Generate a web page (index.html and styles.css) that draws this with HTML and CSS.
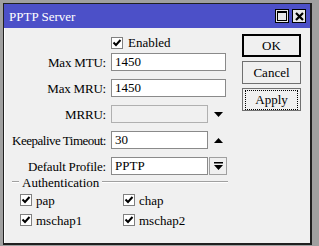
FILE: index.html
```html
<!DOCTYPE html>
<html lang="en">
<head>
    <meta charset="UTF-8">
    <title>PPTP Server</title>
    <link rel="stylesheet" href="styles.css">
</head>
<body>
    <div class="window">
        <div class="titlebar">
            <span class="title">PPTP Server</span>
            <span class="tb-btn"><span class="max-box"></span></span>
            <span class="tb-btn">
                <svg width="9" height="9" viewBox="0 0 9 9"><path d="M1 1L8 8M8 1L1 8" stroke="#000" stroke-width="2.2"/></svg>
            </span>
        </div>
        <div class="body">
            <div class="form">
                <div class="enabled-row">
                    <span class="check"><svg width="10" height="10" viewBox="0 0 10 10"><path d="M1.5 4.5L4 7L8.5 2" fill="none" stroke="#000" stroke-width="2"/></svg></span>
                    <span>Enabled</span>
                </div>
                <div class="fields">
                    <label>Max MTU:</label>
                    <div class="field"><span class="input wide">1450</span></div>
                    <label>Max MRU:</label>
                    <div class="field"><span class="input wide">1450</span></div>
                    <label>MRRU:</label>
                    <div class="field">
                        <span class="input disabled"></span>
                        <span class="arrow"><svg width="9" height="5" viewBox="0 0 9 5"><path d="M0 0H9L4.5 5Z" fill="#000"/></svg></span>
                    </div>
                    <label class="long">Keepalive Timeout:</label>
                    <div class="field">
                        <span class="input short">30</span>
                        <span class="arrow"><svg width="9" height="5" viewBox="0 0 9 5"><path d="M0 5H9L4.5 0Z" fill="#000"/></svg></span>
                    </div>
                    <label>Default Profile:</label>
                    <div class="field">
                        <span class="input short">PPTP</span>
                        <span class="drop"><svg width="9" height="9" viewBox="0 0 9 9"><path d="M0 0H9V1.5H0Z M0 3H9L4.5 8Z" fill="#000"/></svg></span>
                    </div>
                </div>
                <div class="group-title">
                    <span class="line short-line"></span>
                    <span>Authentication</span>
                    <span class="line"></span>
                </div>
                <div class="auth">
                    <div class="opt"><span class="check"><svg width="10" height="10" viewBox="0 0 10 10"><path d="M1.5 4.5L4 7L8.5 2" fill="none" stroke="#000" stroke-width="2"/></svg></span>pap</div>
                    <div class="opt"><span class="check"><svg width="10" height="10" viewBox="0 0 10 10"><path d="M1.5 4.5L4 7L8.5 2" fill="none" stroke="#000" stroke-width="2"/></svg></span>chap</div>
                    <div class="opt"><span class="check"><svg width="10" height="10" viewBox="0 0 10 10"><path d="M1.5 4.5L4 7L8.5 2" fill="none" stroke="#000" stroke-width="2"/></svg></span>mschap1</div>
                    <div class="opt"><span class="check"><svg width="10" height="10" viewBox="0 0 10 10"><path d="M1.5 4.5L4 7L8.5 2" fill="none" stroke="#000" stroke-width="2"/></svg></span>mschap2</div>
                </div>
            </div>
            <div class="buttons">
                <button class="btn default">OK</button>
                <button class="btn">Cancel</button>
                <button class="btn focus"><span>Apply</span></button>
            </div>
        </div>
    </div>
</body>
</html>
```

FILE: styles.css
```css
body {
    margin: 0;
    background-color: #a0a0a0;
    font-family: "Liberation Serif", "Times New Roman", serif;
    font-size: 13px;
    line-height: 15px;
    color: #000;
}
.window {
    box-sizing: border-box;
    margin: 3px 0 0 3px;
    width: 309px;
    height: 242px;
    border: 1px solid #202020;
    border-right-width: 2px;
    border-bottom-width: 2px;
    background-color: #f0f0f0;
    box-shadow: inset 1px 1px 0 #ffffff;
}
.titlebar {
    height: 24px;
    background-color: #4c50c8;
    color: #ffffff;
    display: flex;
    align-items: center;
    padding: 0 4px 0 5px;
    gap: 3px;
}
.title {
    flex: 1;
    padding-top: 1px;
}
.tb-btn {
    box-sizing: border-box;
    width: 14px;
    height: 14px;
    background-color: #e8e8e8;
    border: 1px solid #000;
    display: flex;
    align-items: center;
    justify-content: center;
}
.max-box {
    box-sizing: border-box;
    width: 10px;
    height: 10px;
    border: 1px solid #000;
    border-top-width: 2px;
}
.body {
    display: flex;
    padding: 5px 0 0 8px;
}
.form {
    width: 216px;
}
.enabled-row {
    display: flex;
    align-items: center;
    gap: 5px;
    margin: 3px 0 4px 99px;
    height: 13px;
}
.check {
    box-sizing: border-box;
    flex: 0 0 12px;
    width: 12px;
    height: 12px;
    background-color: #ffffff;
    border: 1px solid #808080;
    display: inline-flex;
    align-items: center;
    justify-content: center;
}
.fields {
    display: grid;
    grid-template-columns: 94px 1fr;
    column-gap: 5px;
    row-gap: 8px;
    align-items: center;
}
.fields label {
    text-align: right;
    white-space: nowrap;
    letter-spacing: -0.2px;
}
.fields label.long {
    letter-spacing: -0.5px;
}
.field {
    display: flex;
    align-items: center;
    height: 18px;
}
.input {
    box-sizing: border-box;
    height: 18px;
    background-color: #ffffff;
    border: 1px solid #8a8a8a;
    padding: 0 3px;
    line-height: 16px;
}
.input.wide {
    width: 115px;
}
.input.disabled {
    width: 97px;
    background-color: #f0f0f0;
    border-color: #b0b0b0;
}
.input.short {
    width: 97px;
}
.arrow {
    width: 18px;
    display: flex;
    justify-content: center;
    padding-left: 1px;
}
.drop {
    box-sizing: border-box;
    width: 18px;
    height: 18px;
    margin-left: 1px;
    border: 1px solid #a0a0a0;
    display: flex;
    align-items: center;
    justify-content: center;
}
.group-title {
    display: flex;
    align-items: center;
    gap: 3px;
    margin-top: 0;
    height: 14px;
}
.line {
    flex: 1;
    height: 1px;
    background-color: #a0a0a0;
    border-bottom: 1px solid #ffffff;
}
.line.short-line {
    flex: 0 0 7px;
}
.auth {
    display: grid;
    grid-template-columns: 103px 1fr;
    row-gap: 8px;
    padding: 5px 0 0 8px;
}
.opt {
    display: flex;
    align-items: center;
    gap: 4px;
    height: 12px;
}
.buttons {
    display: flex;
    flex-direction: column;
    gap: 4px;
    margin-left: 14px;
    padding-top: 1px;
}
.btn {
    box-sizing: border-box;
    width: 59px;
    height: 23px;
    font-family: inherit;
    font-size: 13px;
    color: #000;
    background-color: #f0f0f0;
    border: 1px solid #707070;
    padding: 0;
}
.btn.default {
    border: 2px solid #000;
}
.btn.focus span {
    display: inline-block;
    border: 1px dotted #000;
    padding: 1px 4px;
    width: 43px;
}
```
